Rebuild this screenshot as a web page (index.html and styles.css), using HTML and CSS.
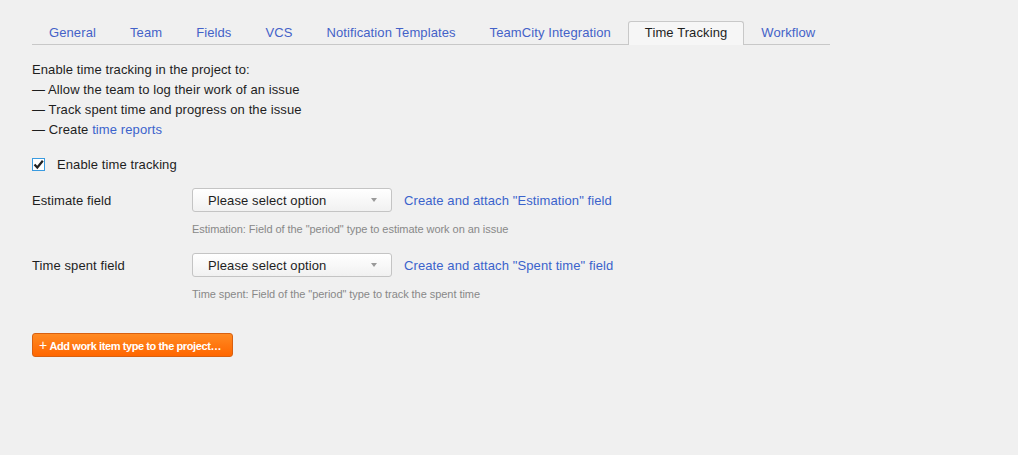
FILE: index.html
```html
<!DOCTYPE html>
<html>
<head>
<meta charset="utf-8">
<link rel="stylesheet" href="styles.css">
</head>
<body>
<div class="page">
  <div class="tabs">
    <a class="tab">General</a>
    <a class="tab">Team</a>
    <a class="tab">Fields</a>
    <a class="tab">VCS</a>
    <a class="tab">Notification Templates</a>
    <a class="tab">TeamCity Integration</a>
    <a class="tab active">Time Tracking</a>
    <a class="tab">Workflow</a>
  </div>
  <div class="intro">
    <div>Enable time tracking in the project to:</div>
    <div>— Allow the team to log their work of an issue</div>
    <div>— Track spent time and progress on the issue</div>
    <div>— Create <a class="link">time reports</a></div>
  </div>
  <label class="check">
    <span class="box"><svg width="11" height="11" viewBox="0 0 11 11"><path d="M1.5 5.5 L4.3 8.5 L9.8 1.8" fill="none" stroke="#222" stroke-width="2.2"/></svg></span>
    <span>Enable time tracking</span>
  </label>
  <div class="field">
    <div class="row">
      <div class="label">Estimate field</div>
      <div class="select"><span>Please select option</span><span class="arrow"></span></div>
      <a class="link attach">Create and attach "Estimation" field</a>
    </div>
    <div class="hint">Estimation: Field of the "period" type to estimate work on an issue</div>
  </div>
  <div class="field">
    <div class="row">
      <div class="label">Time spent field</div>
      <div class="select"><span>Please select option</span><span class="arrow"></span></div>
      <a class="link attach">Create and attach "Spent time" field</a>
    </div>
    <div class="hint">Time spent: Field of the "period" type to track the spent time</div>
  </div>
  <button class="btn"><span class="plus">+</span> Add work item type to the project…</button>
</div>
</body>
</html>
```
FILE: styles.css
```css
html, body {
  margin: 0;
  padding: 0;
  background: #f0f0f0;
}
body {
  font-family: Arial, "Liberation Sans", sans-serif;
  font-size: 13px;
  letter-spacing: 0.1px;
  color: #1e1e1e;
}
.page {
  padding: 21px 32px 0 32px;
}
.tabs {
  display: flex;
  width: 798px;
  border-bottom: 1px solid #c8c8c8;
  height: 23px;
}
.tab {
  display: block;
  padding: 0 16px;
  line-height: 22px;
  color: #4462c8;
  border: 1px solid transparent;
  border-bottom: none;
  white-space: nowrap;
  flex: none;
}
.tab.active {
  background: #f6f6f6;
  border-color: #c8c8c8;
  border-radius: 3px 3px 0 0;
  color: #1e1e1e;
  height: 23px;
}
.intro {
  margin-top: 15px;
  line-height: 20px;
}
.link {
  color: #3b63cc;
}
.check {
  display: flex;
  align-items: center;
  margin-top: 14px;
  height: 20px;
}
.box {
  width: 11px;
  height: 11px;
  border: 1px solid #3a9be0;
  background: #fff;
  display: flex;
  align-items: center;
  justify-content: center;
  margin-right: 12px;
}
.box svg { display: block; }
.field {
  margin-top: 14px;
}
.field + .field {
  margin-top: 16px;
}
.row {
  display: flex;
  align-items: center;
}
.label {
  width: 160px;
}
.select {
  box-sizing: border-box;
  width: 200px;
  height: 24px;
  border: 1px solid #c4c4c4;
  border-radius: 3px;
  background: linear-gradient(#ffffff, #f1f1f1);
  display: flex;
  align-items: center;
  justify-content: space-between;
  padding: 0 14px 0 15px;
  font-size: 13px;
  color: #1e1e1e;
}
.arrow {
  width: 0;
  height: 0;
  border-left: 3px solid transparent;
  border-right: 3px solid transparent;
  border-top: 4px solid #999;
}
.attach {
  margin-left: 12px;
}
.hint {
  margin-top: 9px;
  margin-left: 160px;
  font-size: 11px;
  letter-spacing: -0.05px;
  color: #888;
  line-height: 16px;
}
.btn {
  margin-top: 31px;
  box-sizing: border-box;
  width: 201px;
  height: 24px;
  border: 1px solid #d86010;
  border-radius: 3px;
  background: linear-gradient(#ff8a22, #ff6600);
  color: #fff;
  font-family: Arial, "Liberation Sans", sans-serif;
  font-weight: bold;
  font-size: 11px;
  letter-spacing: -0.4px;
  text-align: left;
  padding: 0 0 0 6px;
  display: block;
  white-space: nowrap;
}
.plus {
  font-size: 14px;
  font-weight: normal;
  letter-spacing: 0;
}
```
